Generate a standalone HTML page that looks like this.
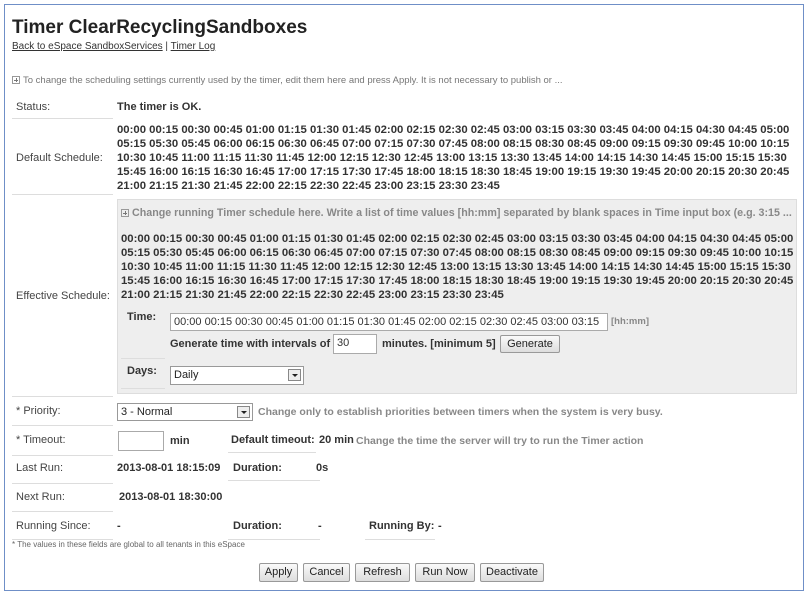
<!DOCTYPE html>
<html><head><meta charset="utf-8"><style>
*{margin:0;padding:0;box-sizing:border-box}
body{width:809px;height:597px;background:#fff;font-family:"Liberation Sans",Arial,sans-serif;color:#333;position:relative;overflow:hidden}
.a{position:absolute;white-space:nowrap}
.frame{position:absolute;left:4px;top:4px;width:800px;height:587px;border:1px solid #6f8fc7;}
.lbl{font-size:11px;color:#444}
.b{font-weight:bold;font-size:11px;color:#333}
.sched{font-weight:bold;font-size:11.35px;line-height:14px;color:#333}
.ul{position:absolute;height:1px;background:#ddd}
.g{color:#888;font-weight:bold;font-size:10.5px}
.inp{position:absolute;background:#fff;border:1px solid #aaa;font-size:11px;padding:2px 3px;color:#333;white-space:nowrap;overflow:hidden}
.sel{position:absolute;background:#fff;border:1px solid #999;font-size:11px;padding:2px 3px;color:#222}
.sel i{position:absolute;right:2px;top:2px;width:13px;height:12px;border:1px solid #888;background:#eee}
.sel i:after{content:"";position:absolute;left:3px;top:4px;border-left:3px solid transparent;border-right:3px solid transparent;border-top:3px solid #222}
.btn{position:absolute;top:563px;height:19px;border:1px solid #999;border-radius:2px;background:linear-gradient(#fafafa,#ddd);font-size:11px;color:#222;text-align:center;line-height:17px}
.plus{display:inline-block;width:8px;height:8px;border:1px solid #999;position:relative;vertical-align:-1px;margin-right:3px}
.plus:before{content:"";position:absolute;left:1px;top:3px;width:4px;height:1px;background:#777}
.plus:after{content:"";position:absolute;left:3px;top:1px;width:1px;height:4px;background:#777}
</style></head><body>
<div class="frame"></div>
<div class="a" style="left:12px;top:17px;font-size:19px;font-weight:bold;color:#222">Timer ClearRecyclingSandboxes</div>
<div class="a" style="left:12px;top:41px;font-size:10px;color:#333"><u>Back to eSpace SandboxServices</u> | <u>Timer Log</u></div>
<div class="a" style="left:12px;top:75px;font-size:9.5px;color:#777"><span class="plus"></span>To change the scheduling settings currently used by the timer, edit them here and press Apply. It is not necessary to publish or ...</div>

<div class="a lbl" style="left:16px;top:101px">Status:</div>
<div class="a b" style="left:117px;top:101px">The timer is OK.</div>
<div class="ul" style="left:12px;top:118px;width:101px"></div>

<div class="a lbl" style="left:16px;top:152px">Default Schedule:</div>
<div class="a sched" style="left:117px;top:123px">00:00 00:15 00:30 00:45 01:00 01:15 01:30 01:45 02:00 02:15 02:30 02:45 03:00 03:15 03:30 03:45 04:00 04:15 04:30 04:45 05:00<br>05:15 05:30 05:45 06:00 06:15 06:30 06:45 07:00 07:15 07:30 07:45 08:00 08:15 08:30 08:45 09:00 09:15 09:30 09:45 10:00 10:15<br>10:30 10:45 11:00 11:15 11:30 11:45 12:00 12:15 12:30 12:45 13:00 13:15 13:30 13:45 14:00 14:15 14:30 14:45 15:00 15:15 15:30<br>15:45 16:00 16:15 16:30 16:45 17:00 17:15 17:30 17:45 18:00 18:15 18:30 18:45 19:00 19:15 19:30 19:45 20:00 20:15 20:30 20:45<br>21:00 21:15 21:30 21:45 22:00 22:15 22:30 22:45 23:00 23:15 23:30 23:45</div>
<div class="ul" style="left:12px;top:194px;width:101px"></div>

<div style="position:absolute;left:117px;top:199px;width:680px;height:195px;background:#eee;border:1px solid #ddd"></div>
<div class="a g" style="left:121px;top:207px;font-size:10.7px"><span class="plus"></span>Change running Timer schedule here. Write a list of time values [hh:mm] separated by blank spaces in Time input box (e.g. 3:15 ...</div>
<div class="a sched" style="left:121px;top:232px">00:00 00:15 00:30 00:45 01:00 01:15 01:30 01:45 02:00 02:15 02:30 02:45 03:00 03:15 03:30 03:45 04:00 04:15 04:30 04:45 05:00<br>05:15 05:30 05:45 06:00 06:15 06:30 06:45 07:00 07:15 07:30 07:45 08:00 08:15 08:30 08:45 09:00 09:15 09:30 09:45 10:00 10:15<br>10:30 10:45 11:00 11:15 11:30 11:45 12:00 12:15 12:30 12:45 13:00 13:15 13:30 13:45 14:00 14:15 14:30 14:45 15:00 15:15 15:30<br>15:45 16:00 16:15 16:30 16:45 17:00 17:15 17:30 17:45 18:00 18:15 18:30 18:45 19:00 19:15 19:30 19:45 20:00 20:15 20:30 20:45<br>21:00 21:15 21:30 21:45 22:00 22:15 22:30 22:45 23:00 23:15 23:30 23:45</div>
<div class="a lbl" style="left:16px;top:290px">Effective Schedule:</div>
<div class="ul" style="left:12px;top:396px;width:101px"></div>

<div class="a b" style="left:127px;top:311px">Time:</div>
<div class="inp" style="left:170px;top:313px;width:438px;height:18px">00:00 00:15 00:30 00:45 01:00 01:15 01:30 01:45 02:00 02:15 02:30 02:45 03:00 03:15</div>
<div class="a g" style="left:611px;top:316px;font-size:9.5px">[hh:mm]</div>
<div class="a b" style="left:170px;top:338px">Generate time with intervals of</div>
<div class="inp" style="left:333px;top:334px;width:44px;height:20px">30</div>
<div class="a b" style="left:382px;top:338px">minutes. [minimum 5]</div>
<div class="btn" style="left:500px;top:335px;width:60px;height:18px">Generate</div>
<div class="ul" style="left:121px;top:358px;width:44px"></div>
<div class="a b" style="left:127px;top:365px">Days:</div>
<div class="sel" style="left:170px;top:366px;width:134px;height:19px">Daily<i></i></div>
<div class="ul" style="left:121px;top:388px;width:44px"></div>

<div class="a lbl" style="left:16px;top:405px">* Priority:</div>
<div class="sel" style="left:117px;top:403px;width:136px;height:18px">3 - Normal<i></i></div>
<div class="a g" style="left:258px;top:406px">Change only to establish priorities between timers when the system is very busy.</div>
<div class="ul" style="left:12px;top:425px;width:101px"></div>

<div class="a lbl" style="left:16px;top:434px">* Timeout:</div>
<div class="inp" style="left:118px;top:431px;width:46px;height:20px"></div>
<div class="a b" style="left:170px;top:435px">min</div>
<div class="a b" style="left:231px;top:434px">Default timeout:</div>
<div class="a b" style="left:319px;top:434px">20 min</div>
<div class="a g" style="left:356px;top:435px">Change the time the server will try to run the Timer action</div>
<div class="ul" style="left:228px;top:452px;width:88px"></div>
<div class="ul" style="left:12px;top:455px;width:101px"></div>

<div class="a lbl" style="left:16px;top:462px">Last Run:</div>
<div class="a b" style="left:117px;top:462px">2013-08-01 18:15:09</div>
<div class="a b" style="left:233px;top:462px">Duration:</div>
<div class="a b" style="left:316px;top:462px">0s</div>
<div class="ul" style="left:228px;top:480px;width:92px"></div>
<div class="ul" style="left:12px;top:483px;width:101px"></div>

<div class="a lbl" style="left:16px;top:491px">Next Run:</div>
<div class="a b" style="left:119px;top:491px">2013-08-01 18:30:00</div>
<div class="ul" style="left:12px;top:511px;width:101px"></div>

<div class="a lbl" style="left:16px;top:520px">Running Since:</div>
<div class="a b" style="left:117px;top:520px">-</div>
<div class="a b" style="left:233px;top:520px">Duration:</div>
<div class="a b" style="left:318px;top:520px">-</div>
<div class="a b" style="left:369px;top:520px">Running By:</div>
<div class="a b" style="left:438px;top:520px">-</div>
<div class="ul" style="left:228px;top:539px;width:92px"></div>
<div class="ul" style="left:365px;top:539px;width:70px"></div>
<div class="ul" style="left:12px;top:539px;width:101px"></div>
<div class="a" style="left:12px;top:540px;font-size:8px;color:#666">* The values in these fields are global to all tenants in this eSpace</div>

<div class="btn" style="left:259px;width:39px">Apply</div>
<div class="btn" style="left:303px;width:47px">Cancel</div>
<div class="btn" style="left:355px;width:55px">Refresh</div>
<div class="btn" style="left:415px;width:60px">Run Now</div>
<div class="btn" style="left:480px;width:64px">Deactivate</div>
</body></html>
